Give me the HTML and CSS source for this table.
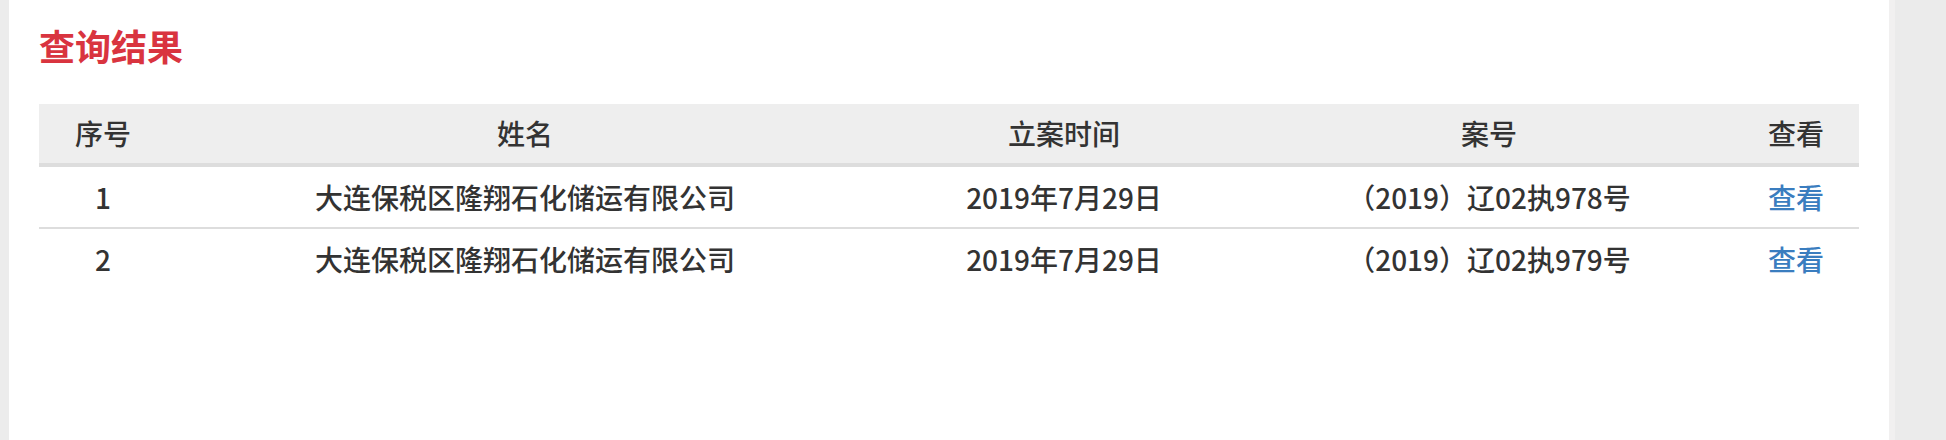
FILE: index.html
```html
<!DOCTYPE html>
<html lang="zh-CN">
<head>
<meta charset="utf-8">
<title>查询结果</title>
<link rel="stylesheet" href="styles.css">
</head>
<body>
<div class="page">
  <div class="side-left"></div>
  <main class="content">
    <h2 class="title">查询结果</h2>
    <table class="result">
      <colgroup>
        <col class="c-no">
        <col class="c-name">
        <col class="c-date">
        <col class="c-case">
        <col class="c-view">
      </colgroup>
      <thead>
        <tr>
          <th>序号</th>
          <th>姓名</th>
          <th>立案时间</th>
          <th>案号</th>
          <th>查看</th>
        </tr>
      </thead>
      <tbody>
        <tr>
          <td>1</td>
          <td>大连保税区隆翔石化储运有限公司</td>
          <td>2019年7月29日</td>
          <td>（2019）辽02执978号</td>
          <td><a class="view" href="#">查看</a></td>
        </tr>
        <tr>
          <td>2</td>
          <td>大连保税区隆翔石化储运有限公司</td>
          <td>2019年7月29日</td>
          <td>（2019）辽02执979号</td>
          <td><a class="view" href="#">查看</a></td>
        </tr>
      </tbody>
    </table>
  </main>
  <div class="side-right"></div>
</div>
</body>
</html>
```

FILE: styles.css
```css
html, body {
  margin: 0;
  padding: 0;
  height: 100%;
  background: #ffffff;
}

body {
  font-family: "Noto Sans CJK SC", "Noto Sans", sans-serif;
  color: #333333;
}

.page {
  display: flex;
  min-height: 440px;
}

.side-left {
  width: 9px;
  flex: 0 0 9px;
  background: #ececec;
}

.side-right {
  width: 51px;
  flex: 0 0 51px;
  background: #ebebeb;
  border-left: 6px solid #f1f0f0;
}

.content {
  flex: 1;
  padding: 27px 30px 0 30px;
  background: #ffffff;
}

.title {
  margin: 0 0 41px 0;
  font-size: 36px;
  line-height: 36px;
  font-weight: 700;
  color: #d9343f;
}

.result {
  width: 100%;
  border-collapse: collapse;
  table-layout: fixed;
  font-size: 28px;
  font-weight: 500;
}

.c-no { width: 128px; }
.c-name { width: 716px; }
.c-date { width: 362px; }
.c-case { width: 488px; }
.c-view { width: 126px; }

.result th {
  height: 59px;
  padding: 0;
  background: #eeeeee;
  border-bottom: 4px solid #dddddd;
  font-weight: 500;
  text-align: center;
  line-height: 59px;
  color: #333333;
}

.result td {
  height: 60px;
  padding: 0;
  text-align: center;
  line-height: 60px;
  color: #333333;
}

.result tbody tr + tr td {
  border-top: 2px solid #dddddd;
}

.view {
  color: #3a7dbf;
  text-decoration: none;
}
```
